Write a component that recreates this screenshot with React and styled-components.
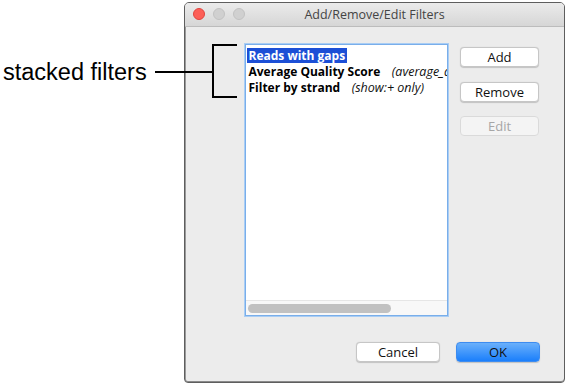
import React from "react";
import styled, { createGlobalStyle } from "styled-components";

const Global = createGlobalStyle`
  html, body { margin: 0; padding: 0; background: #ffffff; }
  body { font-family: "Open Sans", "DejaVu Sans", sans-serif; }
`;

const Stage = styled.div`
  position: relative;
  width: 570px;
  height: 389px;
  display: flex;
  align-items: flex-start;
  padding-top: 2px;
  box-sizing: border-box;
  overflow: hidden;
`;

const Annotation = styled.div`
  width: 184px;
  flex: none;
  padding: 57px 0 0 3px;
  box-sizing: border-box;
`;

const AnnotationLabel = styled.span`
  font-family: "Liberation Sans", Arial, sans-serif;
  font-size: 23.5px;
  line-height: 26px;
  color: #000;
  white-space: nowrap;
`;

const Bracket = styled.svg`
  position: absolute;
  left: 150px;
  top: 40px;
  overflow: visible;
`;

const Window = styled.div`
  width: 381px;
  height: 381px;
  flex: none;
  box-sizing: border-box;
  border: 1px solid #5e5e5e;
  border-radius: 5px 5px 4px 4px;
  box-shadow: inset 1px 0 0 #9a9a9a, inset 0 -1px 0 #8a8a8a;
  background: #ececec;
  display: flex;
  flex-direction: column;
  overflow: hidden;
`;

const TitleBar = styled.div`
  position: relative;
  height: 23px;
  flex: none;
  display: flex;
  align-items: center;
  justify-content: center;
  background: linear-gradient(#ebebeb, #d6d6d6);
  border-bottom: 1px solid #bcbcbc;
`;

const Lights = styled.div`
  position: absolute;
  left: 8px;
  top: 5px;
  display: flex;
  gap: 8px;
`;

const Light = styled.span`
  width: 12px;
  height: 12px;
  border-radius: 50%;
  box-sizing: border-box;
  background: ${(p) => (p.$red ? "#fc5f57" : "#d0d0d0")};
  border: 1px solid ${(p) => (p.$red ? "#e0443e" : "#c2c2c2")};
`;

const Title = styled.span`
  font-size: 12.5px;
  color: #444;
  line-height: 16px;
`;

const Body = styled.div`
  flex: 1;
  display: flex;
  flex-direction: column;
  padding: 17px 24px 0 60px;
`;

const MainRow = styled.div`
  display: flex;
  align-items: flex-start;
  gap: 12px;
`;

const ListBox = styled.div`
  width: 203px;
  height: 272px;
  box-sizing: border-box;
  border: 1px solid #79aeea;
  box-shadow: 0 0 0 1px #a9cdf4;
  background: #ffffff;
  display: flex;
  flex-direction: column;
  overflow: hidden;
`;

const Items = styled.div`
  flex: 1;
  padding: 2px 0 0 1px;
  overflow: hidden;
`;

const Row = styled.div`
  display: flex;
  align-items: center;
  height: 16px;
  white-space: nowrap;
`;

const Name = styled.span`
  font-weight: 700;
  font-size: 12px;
  line-height: 15px;
  padding: 0 1.5px;
  color: ${(p) => (p.$selected ? "#ffffff" : "#000000")};
  background: ${(p) => (p.$selected ? "#1c4fd6" : "transparent")};
`;

const Detail = styled.span`
  font-style: italic;
  font-size: 12.5px;
  line-height: 15px;
  margin-left: 10px;
  color: #111;
`;

const ScrollTrack = styled.div`
  height: 14px;
  flex: none;
  background: #f8f8f8;
  border-top: 1px solid #e6e6e6;
  display: flex;
  align-items: center;
  padding-left: 2px;
`;

const ScrollThumb = styled.div`
  width: 143px;
  height: 9px;
  border-radius: 5px;
  background: #c1c1c1;
`;

const ButtonColumn = styled.div`
  display: flex;
  flex-direction: column;
  gap: 14.5px;
  padding-top: 3px;
`;

const Button = styled.button`
  width: ${(p) => p.$w || 79}px;
  height: 20px;
  box-sizing: border-box;
  padding: 0;
  font-family: "Open Sans", "DejaVu Sans", sans-serif;
  font-size: 13px;
  line-height: 16px;
  border-radius: 4px;
  border: 1px solid ${(p) => (p.$primary ? "#3d8cf0" : p.disabled ? "#dadada" : "#c6c6c6")};
  color: ${(p) => (p.disabled ? "#a6a6a6" : "#111")};
  background: ${(p) =>
    p.$primary
      ? "linear-gradient(#6ab0fb, #1b7ffb)"
      : p.disabled
      ? "#f4f4f4"
      : "#ffffff"};
  box-shadow: ${(p) => (p.disabled ? "none" : "0 0.5px 1px rgba(0,0,0,0.18)")};
`;

const Footer = styled.div`
  display: flex;
  justify-content: flex-end;
  gap: 16px;
  margin-top: 26px;
`;

export default function App() {
  return (
    <>
      <Global />
      <Stage>
        <Annotation>
          <AnnotationLabel>stacked filters</AnnotationLabel>
        </Annotation>
        <Window>
          <TitleBar>
            <Lights>
              <Light $red />
              <Light />
              <Light />
            </Lights>
            <Title>Add/Remove/Edit Filters</Title>
          </TitleBar>
          <Body>
            <MainRow>
              <ListBox>
                <Items>
                  <Row>
                    <Name $selected>Reads with gaps</Name>
                  </Row>
                  <Row>
                    <Name>Average Quality Score</Name>
                    <Detail>(average_quality &gt; 20)</Detail>
                  </Row>
                  <Row>
                    <Name>Filter by strand</Name>
                    <Detail>(show:+ only)</Detail>
                  </Row>
                </Items>
                <ScrollTrack>
                  <ScrollThumb />
                </ScrollTrack>
              </ListBox>
              <ButtonColumn>
                <Button>Add</Button>
                <Button>Remove</Button>
                <Button disabled>Edit</Button>
              </ButtonColumn>
            </MainRow>
            <Footer>
              <Button $w={84}>Cancel</Button>
              <Button $w={84} $primary>OK</Button>
            </Footer>
          </Body>
        </Window>
        <Bracket width="95" height="62" viewBox="0 0 95 62">
          <path d="M5 32 H63 M87 5 H63 V57 H87" fill="none" stroke="#000" strokeWidth="2" />
        </Bracket>
      </Stage>
    </>
  );
}
